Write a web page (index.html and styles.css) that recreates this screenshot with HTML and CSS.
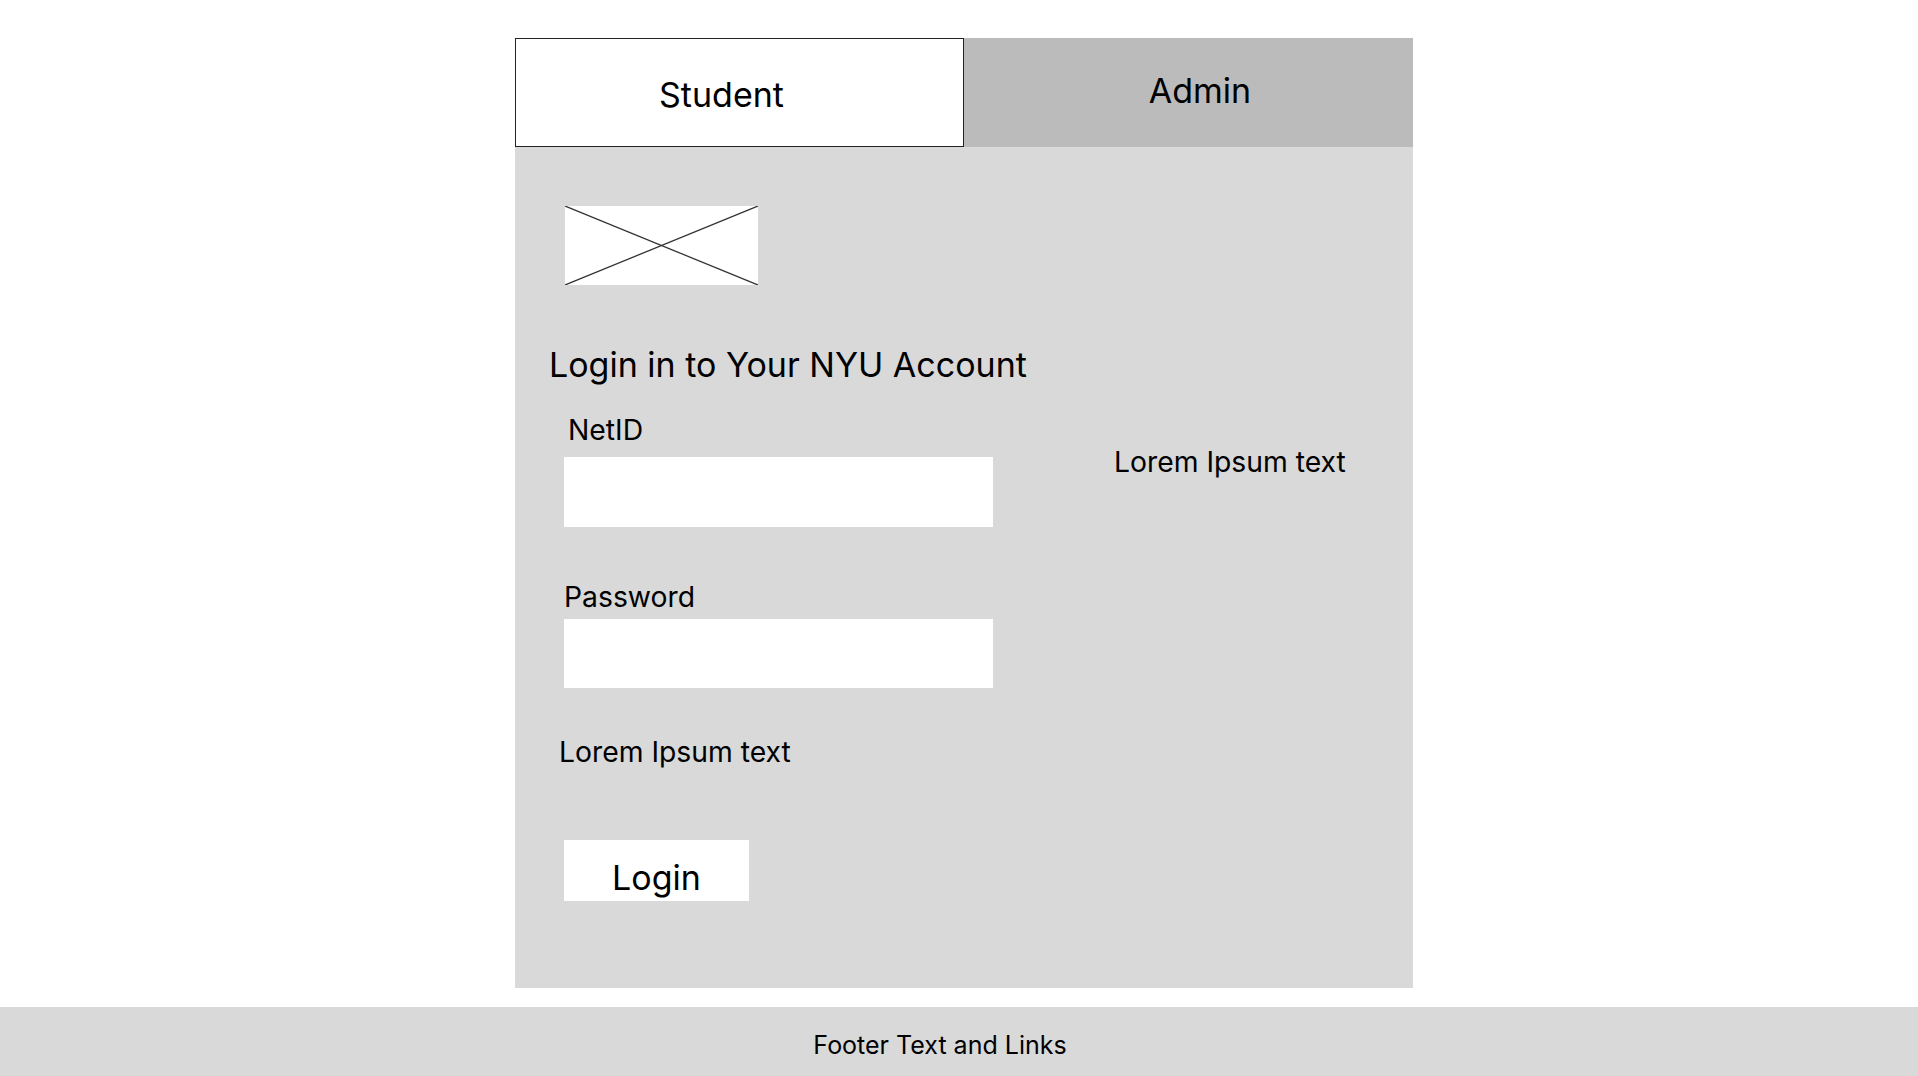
FILE: index.html
```html
<!DOCTYPE html>
<html lang="en">

<head>
    <meta charset="UTF-8">
    <meta name="viewport" content="width=device-width, initial-scale=1.0">
    <title>NYU Login</title>

    <link rel="stylesheet" href="styles.css">
</head>

<body>
    <div class="tabs">
        <div class="tab active">Student</div>
        <div class="tab other">Admin</div>
    </div>

    <div class="panel">
        <div class="formCol">
            <div class="logo">
                <svg width="193" height="79" viewBox="0 0 193 79" preserveAspectRatio="none">
                    <line x1="0" y1="0" x2="193" y2="79" stroke="#333" stroke-width="1.3" />
                    <line x1="0" y1="79" x2="193" y2="0" stroke="#333" stroke-width="1.3" />
                </svg>
            </div>

            <h2 class="title">Login in to Your NYU Account</h2>

            <form onsubmit="event.preventDefault()">
                <label class="netLabel" for="netid">NetID</label>
                <input id="netid" type="text" autocomplete="off">

                <label class="passLabel" for="password">Password</label>
                <input id="password" type="password" class="passInput">

                <p class="note">Lorem Ipsum text</p>

                <button>Login</button>
            </form>
        </div>

        <div class="sideCol">
            <p>Lorem Ipsum text</p>
        </div>
    </div>

    <footer>Footer Text and Links</footer>
</body>

</html>
```

FILE: styles.css
```css
* {
    box-sizing: border-box;
    margin: 0;
    padding: 0;
}

body {
    background-color: #ffffff;
    font-family: Inter, "Noto Sans", sans-serif;
    color: #000;
    padding-top: 38px;
}

.tabs {
    display: flex;
    width: 898px;
    margin-left: 515px;
    height: 109px;
}

.tab {
    width: 449px;
    font-size: 34px;
    line-height: 41px;
    text-align: center;
}

.active {
    background-color: #ffffff;
    border: 1px solid #222;
    padding-top: 35px;
    padding-right: 36px;
}

.other {
    background-color: #bbbbbb;
    padding-top: 32px;
    padding-left: 23px;
}

.panel {
    display: flex;
    width: 898px;
    margin-left: 515px;
    background-color: #d9d9d9;
    padding: 59px 0 87px 34px;
}

.formCol {
    display: flex;
    flex-direction: column;
    width: 444px;
}

.logo {
    width: 193px;
    height: 79px;
    margin-left: 16px;
    background-color: #ffffff;
}

.logo svg {
    display: block;
}

.title {
    font-size: 34px;
    font-weight: 400;
    line-height: 41px;
    margin-top: 59px;
    white-space: nowrap;
}

form {
    display: flex;
    flex-direction: column;
    align-items: flex-start;
}

label,
.note,
.sideCol p {
    font-size: 28.3px;
    line-height: 34px;
}

.netLabel {
    margin: 28px 0 0 19px;
}

input {
    width: 429px;
    height: 70px;
    margin: 10px 0 0 15px;
    border: none;
    background-color: #ffffff;
    font-size: 22px;
    padding: 0 12px;
}

.passLabel {
    margin: 53px 0 0 15px;
}

.passInput {
    margin-top: 5px;
    height: 69px;
}

.note {
    margin: 47px 0 0 10px;
}

button {
    width: 185px;
    height: 61px;
    margin: 71px 0 0 15px;
    border: none;
    background-color: #ffffff;
    font-family: inherit;
    font-size: 34px;
    line-height: 41px;
    padding-top: 17px;
    padding-bottom: 3px;
    cursor: pointer;
}

.sideCol {
    margin-left: 121px;
    padding-top: 239px;
}

footer {
    margin-top: 19px;
    height: 69px;
    background-color: #d9d9d9;
    font-size: 25px;
    line-height: 30px;
    padding: 23px 38px 0 0;
    text-align: center;
}
```
